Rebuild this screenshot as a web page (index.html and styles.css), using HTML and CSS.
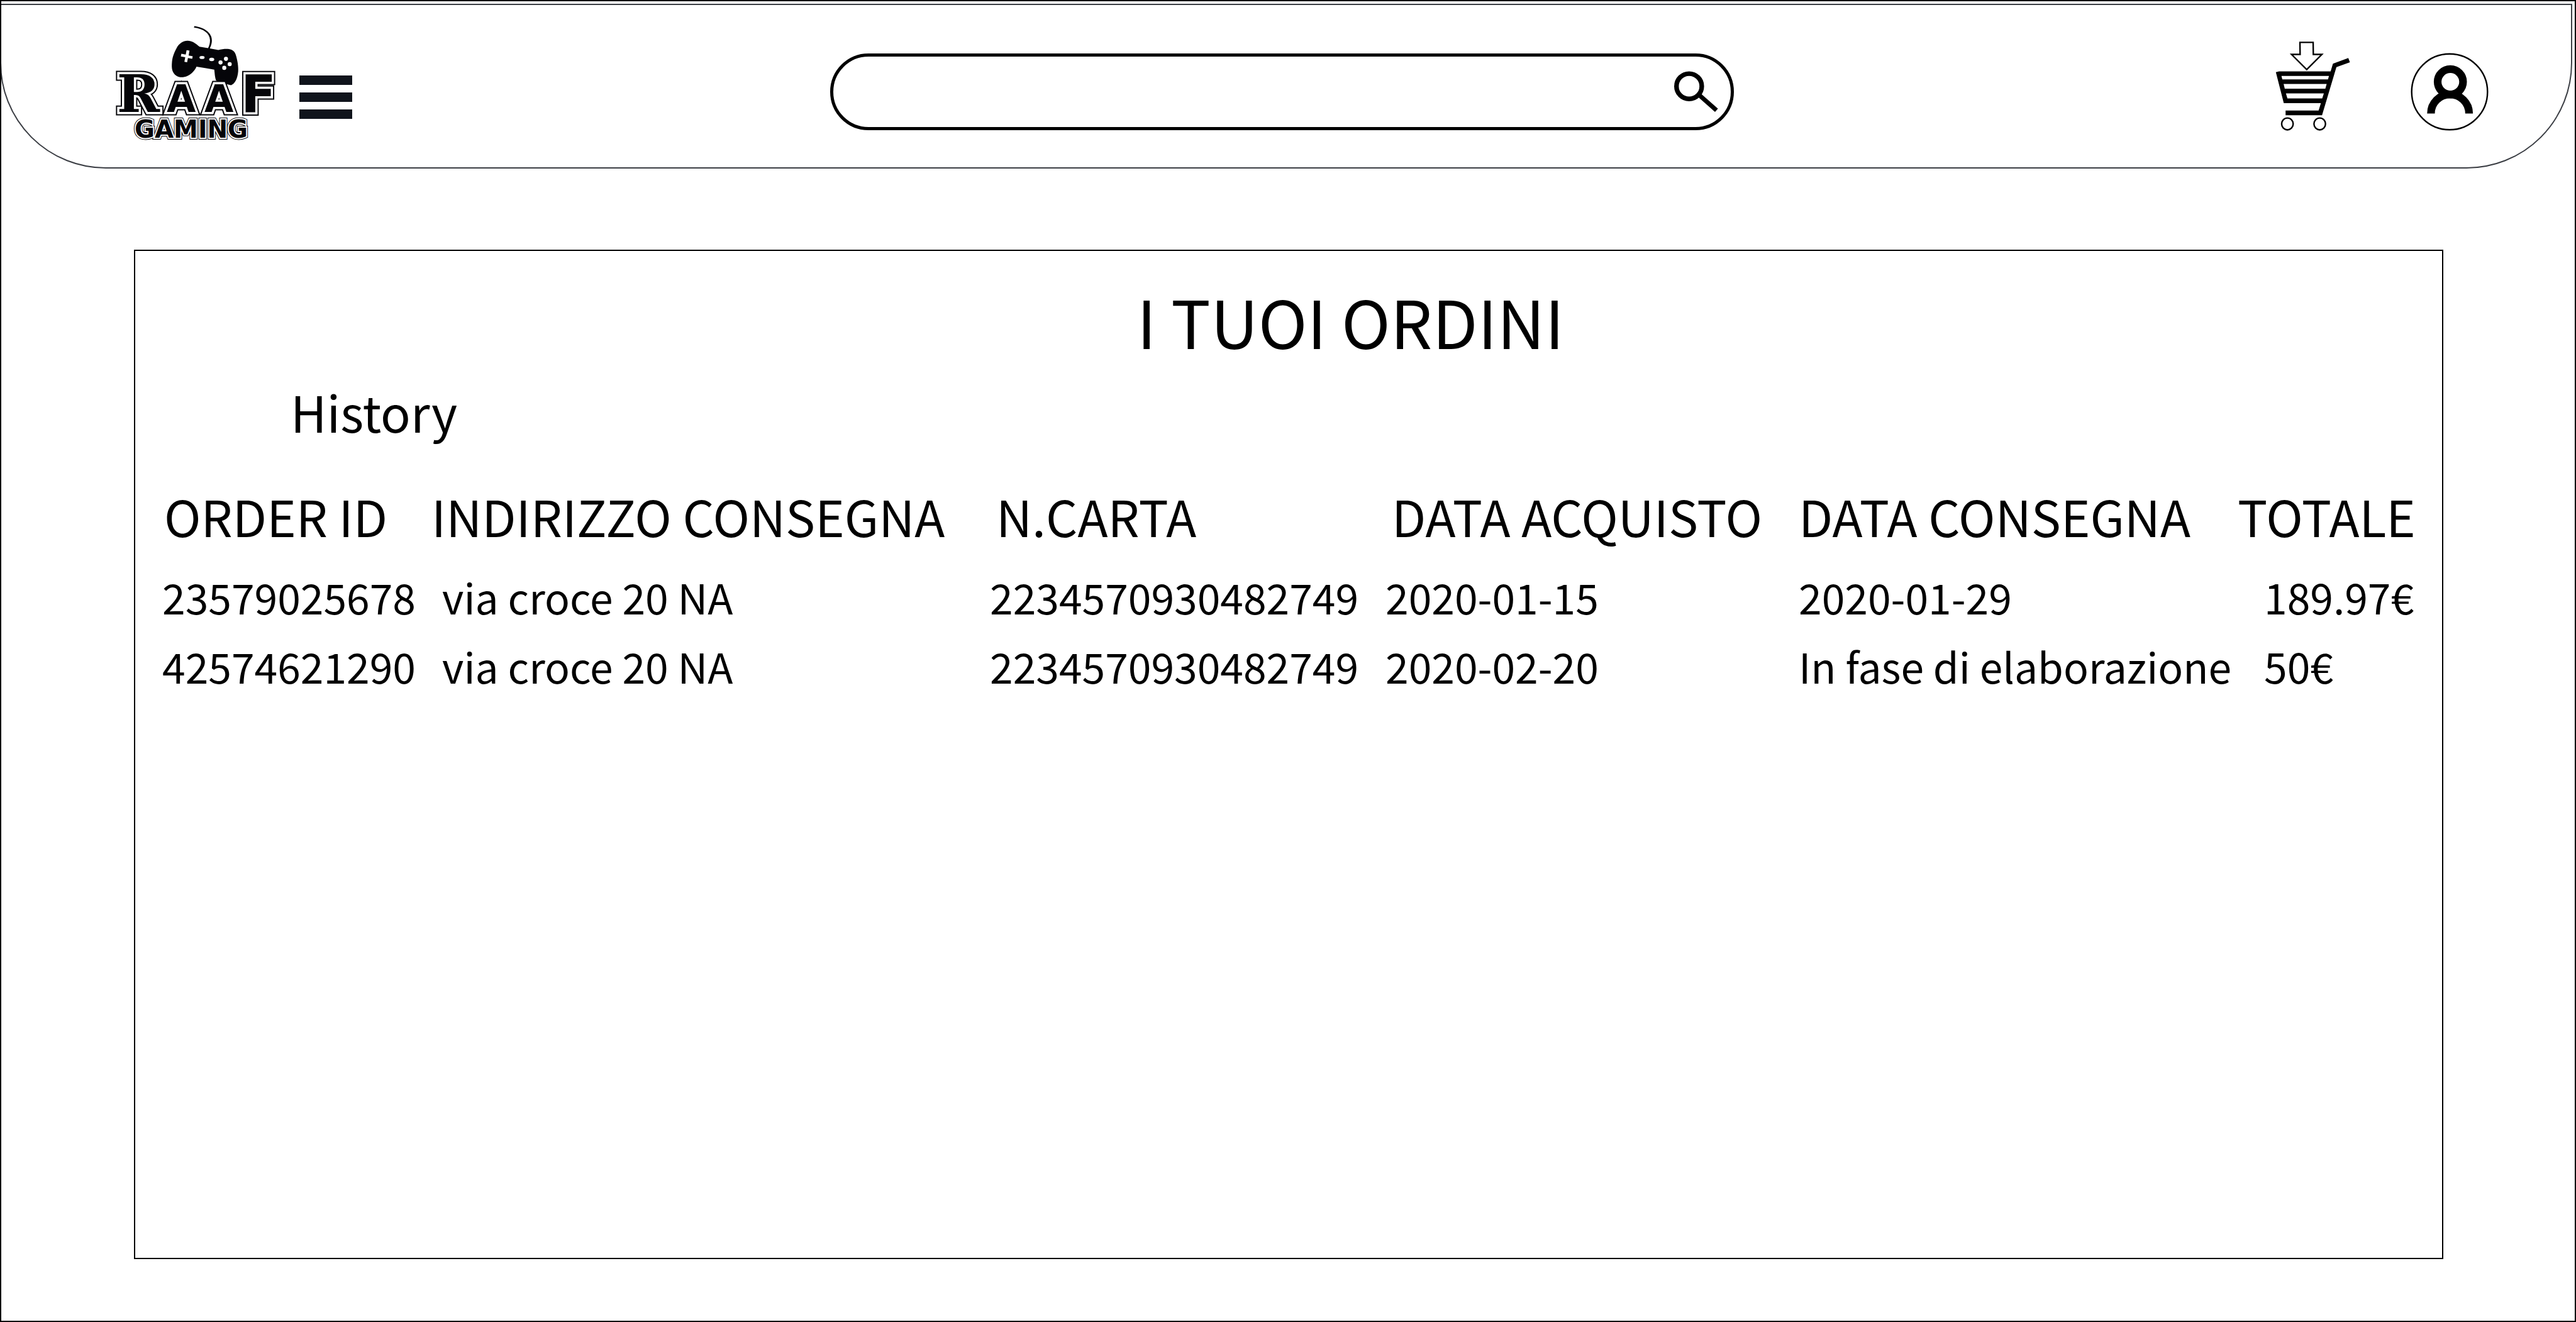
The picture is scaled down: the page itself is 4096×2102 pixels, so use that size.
FILE: index.html
```html
<!DOCTYPE html>
<html lang="it">
<head>
<meta charset="utf-8">
<title>Raaf Gaming - I tuoi ordini</title>
<link rel="stylesheet" href="styles.css">
</head>
<body>
<div class="page">
  <header class="topbar">
    <div class="brand">
      <a class="logo" href="#" aria-label="Raaf Gaming">
        <svg width="256" height="182" viewBox="0 0 256 182">
          <g transform="matrix(.2698 0 0 .19587 -21.5 -17.5)">
            <path class="ink" d="M536 92C600 105 640 150 639 210C638 240 632 255 626 276L616 272C624 250 628 230 628 205C626 150 590 115 533 104Z"/>
            <path class="ink" d="M495 211C520 210 540 230 566 259L622 272L677 286C700 278 720 275 740 278C760 282 775 300 780 325C790 370 796 420 794 460C790 520 775 560 752 572L690 552L664 535C655 500 656 470 653 446L600 433L548 421C540 450 520 480 495 497C470 512 445 510 430 495C405 470 400 440 404 380C408 330 420 300 433 265C445 235 470 211 495 211Z"/>
            <path class="paper" d="M490 287L507 291L502 331L526 337L523 357L498 351L493 385L477 381L482 345L456 338L459 317L485 323Z"/>
            <ellipse class="paper" cx="581" cy="347" rx="15" ry="12"/>
            <ellipse class="paper" cx="638" cy="362" rx="15" ry="14"/>
            <ellipse class="paper" cx="722" cy="358" rx="12" ry="17"/>
            <ellipse class="paper" cx="690" cy="387" rx="12" ry="17"/>
            <ellipse class="paper" cx="744" cy="401" rx="12" ry="17"/>
            <ellipse class="paper" cx="712" cy="431" rx="12" ry="17"/>
          </g>
          <use href="#raaf" class="edge"/>
          <use href="#raaf" class="gap"/>
          <use href="#gaming" class="edge thin"/>
          <use href="#gaming" class="gap thin"/>
          <g class="core">
            <g id="raaf" class="raaf">
              <text class="cap slab" x="0" y="137">R</text>
              <text class="small" x="79" y="137">A</text>
              <text class="small" x="139" y="137">A</text>
              <text class="cap" x="197" y="137">F</text>
            </g>
            <text id="gaming" class="gaming" x="118" y="178">GAMING</text>
          </g>
        </svg>
      </a>
      <button class="icon-button menu" type="button" aria-label="Menu">
        <svg width="84" height="69" viewBox="0 0 84 69"><path fill="#10141c" d="M0 0H84V15H0ZM0 27H84V42H0ZM0 54H84V69H0Z"/></svg>
      </button>
    </div>
    <form class="search" role="search">
      <input class="search-input" type="search" aria-label="Cerca">
      <button class="icon-button" type="submit" aria-label="Avvia ricerca">
        <svg width="72" height="68" viewBox="0 0 72 68" fill="none" stroke="#000"><circle cx="24.8" cy="25.2" r="20.1" stroke-width="7.4"/><path d="M40 38.4L68.3 63.4" stroke-width="7"/></svg>
      </button>
    </form>
    <nav class="actions" aria-label="Account">
      <a class="cart" href="#" aria-label="Carrello">
        <svg width="120" height="144" viewBox="0 0 120 144">
          <g transform="matrix(.2623 0 0 .19587 -33.6 -18)">
            <path d="M131 346L158 337L150 339H463L477 277L570 231L580 265L498 305L411 695H190V657H390L404 597H179ZM165 377L170 405H447L453 377ZM178 442L185 480H431L439 442ZM192 518L201 559H412L422 518Z" fill-rule="evenodd"/>
            <g class="outline">
              <path d="M277 104H357L358 202H410L318 325L226 202H278Z"/>
              <ellipse cx="201" cy="766" rx="35" ry="48"/>
              <ellipse cx="397" cy="766" rx="35" ry="48"/>
            </g>
          </g>
        </svg>
      </a>
      <a class="profile" href="#" aria-label="Profilo">
        <svg width="124" height="124" viewBox="0 0 124 124" fill="none" stroke="#000">
          <circle cx="62" cy="62" r="60.3" stroke-width="2.4"/>
          <circle cx="63.2" cy="46.1" r="20.2" stroke-width="12.2"/>
          <path d="M32.4 96.4A30.3 30.3 0 0 1 93 96.4" stroke-width="12.3"/>
        </svg>
      </a>
    </nav>
  </header>
  <main class="orders">
    <h1 class="title">I TUOI ORDINI</h1>
    <h2 class="subtitle">History</h2>
    <table class="table">
      <colgroup><col class="c-id"><col class="c-address"><col class="c-card"><col class="c-bought"><col class="c-delivery"><col></colgroup>
      <thead>
        <tr><th class="lead">ORDER ID</th><th class="lead">INDIRIZZO CONSEGNA</th><th class="mid">N.CARTA</th><th class="mid">DATA ACQUISTO</th><th>DATA CONSEGNA</th><th>TOTALE</th></tr>
      </thead>
      <tbody>
        <tr><td>23579025678</td><td class="address">via croce 20 NA</td><td>2234570930482749</td><td>2020-01-15</td><td>2020-01-29</td><td class="total">189.97€</td></tr>
        <tr><td>42574621290</td><td class="address">via croce 20 NA</td><td>2234570930482749</td><td>2020-02-20</td><td>In fase di elaborazione</td><td class="total">50€</td></tr>
      </tbody>
    </table>
  </main>
</div>
</body>
</html>
```
FILE: styles.css
```css
* { box-sizing: border-box; }

body {
  margin: 0;
  background: #fff;
  color: #000;
  font-family: "Noto Sans CJK JP", "Noto Sans", sans-serif;
}

svg { display: block; overflow: visible; }

.page {
  position: relative;
  display: flex;
  flex-direction: column;
  min-height: 100vh;
  padding: 6px 6px 100px 0;
}

/* Window frame, drawn over the edge of the top bar */
.page::after {
  content: "";
  position: absolute;
  inset: 0;
  border: 2px solid #000;
  pointer-events: none;
}

.topbar {
  display: grid;
  grid-template-columns: minmax(0, 1134fr) minmax(0, 1437fr) minmax(0, 1200fr);
  align-items: center;
  min-height: 262px;
  padding: 18px 131px 0 184px;
  border: 2px solid #3b3e44;
  border-radius: 0 0 168px 168px;
}

.brand {
  display: flex;
  align-items: center;
  gap: 34px;
}

.logo { margin-bottom: 28px; }

.ink { fill: #050509; }
.paper { fill: #fff; }

.raaf, .gaming { font-family: "DejaVu Sans", sans-serif; font-weight: 700; }
.cap { font-size: 82px; }
.slab { font-family: "DejaVu Serif", serif; }
.small { font-size: 60px; }
.gaming { font-size: 39px; text-anchor: middle; }
.edge { fill: #050509; stroke: #050509; stroke-width: 11px; }
.gap { fill: #fff; stroke: #fff; stroke-width: 7px; }
.edge.thin { stroke-width: 6px; }
.gap.thin { stroke-width: 4px; }
.core { fill: #050509; }

.icon-button {
  padding: 0;
  border: 0;
  background: none;
  cursor: pointer;
}

.menu { margin-top: 16px; }

.search {
  display: flex;
  align-items: center;
  height: 122px;
  padding: 0 19px 0 56px;
  border: 5px solid #000;
  border-radius: 61px;
}

.search-input {
  flex: 1;
  min-width: 0;
  height: 100%;
  border: 0;
  outline: 0;
  background: none;
  font: inherit;
  font-size: 66px;
}

.actions {
  display: flex;
  align-items: center;
  justify-content: flex-end;
  gap: 95px;
}

.cart { margin-bottom: 18px; }
.outline { fill: none; stroke: #000; stroke-width: 2.4px; }
.outline * { vector-effect: non-scaling-stroke; }

.orders {
  flex: 1;
  margin: 129px 205px 0 213px;
  padding: 30px 0 0 43px;
  border: 2px solid #000;
}

.title, .subtitle {
  margin: 0;
  font-weight: 400;
}

.title {
  padding-left: 154px;
  font-size: 105px;
  line-height: 160px;
  text-align: center;
}

.subtitle {
  padding-left: 204px;
  font-size: 79px;
  line-height: 130px;
}

.table {
  width: 100%;
  margin-top: 28px;
  border-collapse: collapse;
  table-layout: fixed;
  white-space: nowrap;
}

.table th, .table td {
  padding: 0;
  font-weight: 400;
  text-align: left;
}

.table th { height: 146px; font-size: 79px; line-height: 146px; }
.table td { height: 110px; font-size: 66px; line-height: 110px; }

.c-id { width: 425px; }
.c-address { width: 891px; }
.c-card { width: 629px; }
.c-bought { width: 657px; }
.c-delivery { width: 698px; }

.table .lead { padding-left: 3px; }
.table .mid { padding-left: 10px; }
.table .address { padding-left: 20px; }
.table .total { padding-left: 42px; }
```
